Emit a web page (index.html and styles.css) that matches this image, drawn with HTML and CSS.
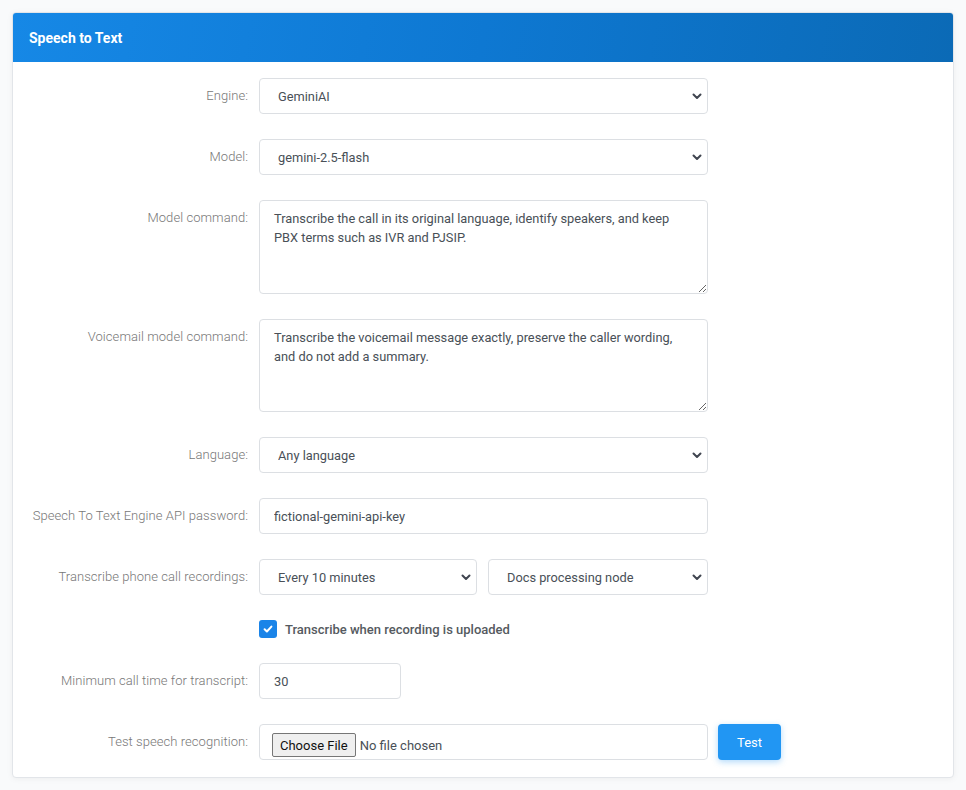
FILE: index.html
```html
<!DOCTYPE html>
<html lang="en">
<head>
<meta charset="utf-8">
<title>Speech to Text</title>
<link rel="stylesheet" href="styles.css">
</head>
<body>
<div class="card">
  <div class="card-header">Speech to Text</div>
  <div class="card-body">
    <div class="row">
      <label class="label">Engine:</label>
      <div class="control"><select class="input select"><option>GeminiAI</option></select></div>
    </div>
    <div class="row">
      <label class="label">Model:</label>
      <div class="control"><select class="input select"><option>gemini-2.5-flash</option></select></div>
    </div>
    <div class="row">
      <label class="label">Model command:</label>
      <div class="control"><textarea class="input textarea">Transcribe the call in its original language, identify speakers, and keep PBX terms such as IVR and PJSIP.</textarea></div>
    </div>
    <div class="row">
      <label class="label">Voicemail model command:</label>
      <div class="control"><textarea class="input textarea">Transcribe the voicemail message exactly, preserve the caller wording, and do not add a summary.</textarea></div>
    </div>
    <div class="row">
      <label class="label">Language:</label>
      <div class="control"><select class="input select"><option>Any language</option></select></div>
    </div>
    <div class="row">
      <label class="label">Speech To Text Engine API password:</label>
      <div class="control"><input class="input text" type="text" value="fictional-gemini-api-key"></div>
    </div>
    <div class="row">
      <label class="label">Transcribe phone call recordings:</label>
      <div class="control pair">
        <select class="input select"><option>Every 10 minutes</option></select>
        <select class="input select"><option>Docs processing node</option></select>
      </div>
    </div>
    <div class="row row-check">
      <div class="label"></div>
      <div class="control check">
        <span class="checkbox"><svg width="12" height="12" viewBox="0 0 12 12"><path d="M2.6 6.3 L4.9 8.5 L9.4 3.6" fill="none" stroke="#fff" stroke-width="2" stroke-linecap="round" stroke-linejoin="round"/></svg></span>
        <span class="check-label">Transcribe when recording is uploaded</span>
      </div>
    </div>
    <div class="row">
      <label class="label">Minimum call time for transcript:</label>
      <div class="control"><input class="input text short" type="text" value="30"></div>
    </div>
    <div class="row">
      <label class="label">Test speech recognition:</label>
      <div class="control file-row">
        <div class="input filebox"><input class="file" type="file"></div>
        <button class="btn" type="button">Test</button>
      </div>
    </div>
  </div>
</div>
</body>
</html>
```

FILE: styles.css
```css
* { box-sizing: border-box; }
html, body { margin: 0; }
body {
  background: #f9fafb;
  padding: 12px 12px;
  font-family: Roboto, "Liberation Sans", sans-serif;
  font-size: 13px;
  color: #495057;
}
.card {
  width: 942px;
  background: #fff;
  border: 1px solid #e2e5e9;
  border-radius: 4px;
  box-shadow: 0 1px 6px rgba(0, 0, 0, 0.05);
  overflow: hidden;
}
.card-header {
  height: 49px;
  display: flex;
  align-items: center;
  padding: 0 16px;
  color: #fff;
  font-weight: 700;
  font-size: 14px;
  background: linear-gradient(100deg, #1688e6 0%, #0e78d2 50%, #0b6ab6 100%);
}
.card-body {
  padding: 16px 0 17px;
  display: flex;
  flex-direction: column;
  gap: 25px;
}
.row {
  display: grid;
  grid-template-columns: 235px 449px;
  column-gap: 11px;
  align-items: start;
}
.label {
  text-align: right;
  line-height: 36px;
  color: #777;
  font-weight: 300;
  font-size: 13px;
  letter-spacing: 0.06px;
  white-space: nowrap;
}
.control { min-width: 0; }
.input {
  display: block;
  width: 100%;
  height: 36px;
  border: 1px solid #dcdfe3;
  border-radius: 4px;
  background: #fff;
  font-family: Roboto, "Liberation Sans", sans-serif;
  font-size: 12.8px;
  color: #495057;
  outline: none;
}
.select {
  appearance: none;
  -webkit-appearance: none;
  padding: 0 24px 0 18px;
  background-image: url("data:image/svg+xml,%3Csvg xmlns='http://www.w3.org/2000/svg' width='10' height='7' viewBox='0 0 10 7'%3E%3Cpath d='M1.5 1.5 L5 5 L8.5 1.5' fill='none' stroke='%23404550' stroke-width='2' stroke-linecap='round' stroke-linejoin='round'/%3E%3C/svg%3E");
  background-repeat: no-repeat;
  background-position: right 5px center;
  background-size: 10px 7px;
}
.textarea {
  height: 93.5px;
  padding: 8px 14px 6px;
  line-height: 19px;
  resize: vertical;
}
.text { padding: 0 14px; }
.short { width: 142px; }
.pair {
  display: grid;
  grid-template-columns: 218px 220px;
  column-gap: 11px;
}
.row-check { align-items: center; }
.row-check .label { line-height: 18px; }
.check {
  display: flex;
  align-items: center;
  gap: 8px;
  height: 18px;
}
.checkbox {
  width: 18px;
  height: 18px;
  border-radius: 3px;
  background: #1a84e8;
  display: flex;
  align-items: center;
  justify-content: center;
}
.check-label {
  font-weight: 500;
  color: #555a60;
}
.file-row {
  display: flex;
  gap: 10px;
  width: 522px;
}
.filebox {
  width: 449px;
  flex: none;
  display: flex;
  align-items: center;
  padding: 6px 12px 0;
}
.file {
  font-family: Roboto, "Liberation Sans", sans-serif;
  font-size: 13px;
  color: #495057;
}
.file::file-selector-button {
  font-family: Roboto, "Liberation Sans", sans-serif;
  font-size: 13px;
  color: #111;
  height: 24px;
  padding: 0 7px;
  margin-right: 4px;
  background: #efefef;
  border: 1px solid #767676;
  border-radius: 2px;
}
.btn {
  width: 63px;
  height: 36px;
  border: none;
  border-radius: 4px;
  background: #2196f3;
  color: #fff;
  font-family: Roboto, "Liberation Sans", sans-serif;
  font-size: 13px;
  box-shadow: 0 2px 6px rgba(33, 150, 243, 0.35);
}
```
